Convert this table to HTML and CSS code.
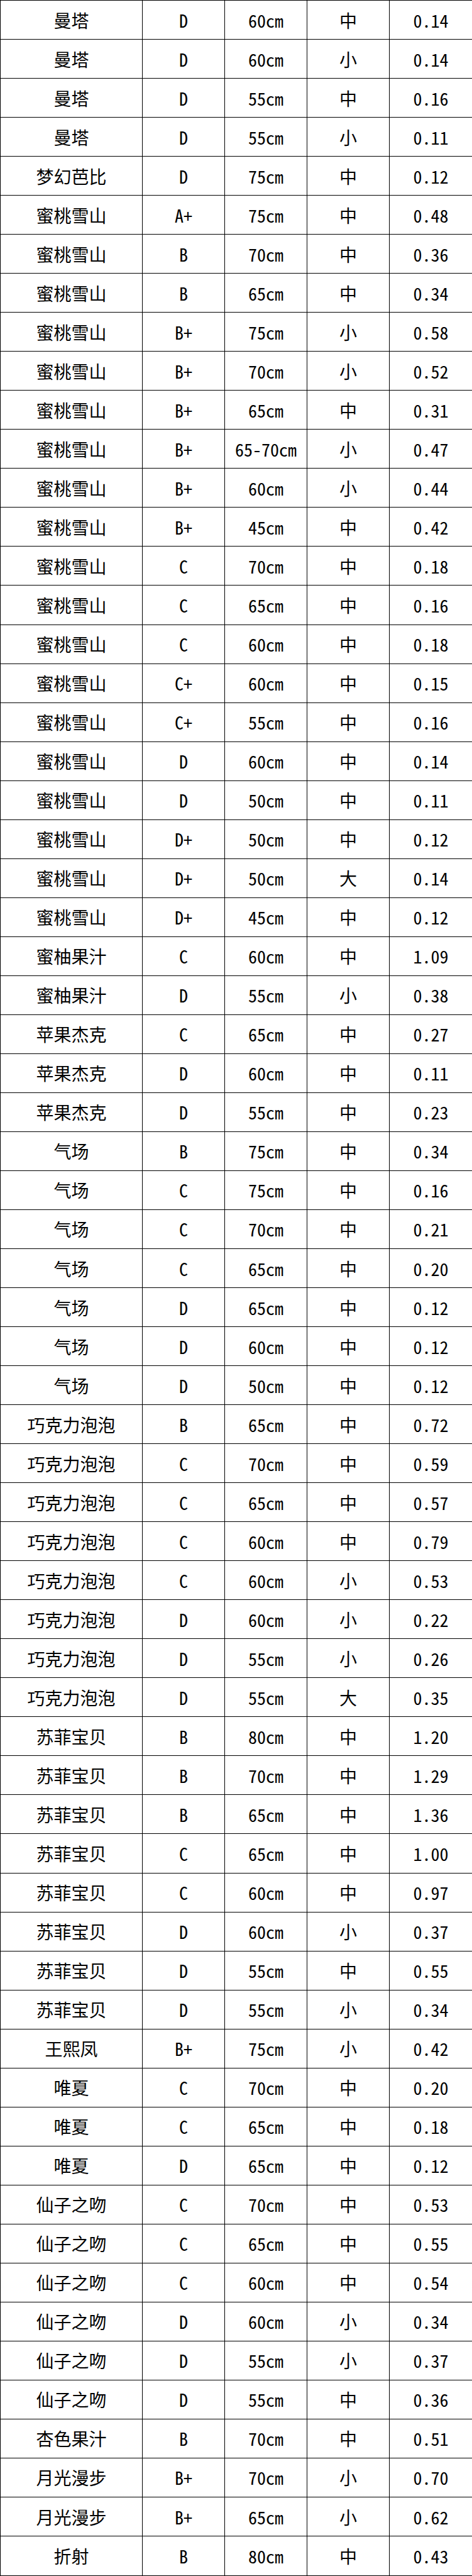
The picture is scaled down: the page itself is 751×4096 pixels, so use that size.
FILE: index.html
```html
<!DOCTYPE html>
<html lang="zh-CN">
<head>
<meta charset="utf-8">
<title>价格表</title>
<link rel="stylesheet" href="styles.css">
</head>
<body>
<table class="sheet">
<colgroup>
<col class="col-name"><col class="col-grade"><col class="col-size"><col class="col-kind"><col class="col-price">
</colgroup>
<tbody>
<tr><td>曼塔</td><td>D</td><td>60cm</td><td>中</td><td>0.14</td></tr>
<tr><td>曼塔</td><td>D</td><td>60cm</td><td>小</td><td>0.14</td></tr>
<tr><td>曼塔</td><td>D</td><td>55cm</td><td>中</td><td>0.16</td></tr>
<tr><td>曼塔</td><td>D</td><td>55cm</td><td>小</td><td>0.11</td></tr>
<tr><td>梦幻芭比</td><td>D</td><td>75cm</td><td>中</td><td>0.12</td></tr>
<tr><td>蜜桃雪山</td><td>A+</td><td>75cm</td><td>中</td><td>0.48</td></tr>
<tr><td>蜜桃雪山</td><td>B</td><td>70cm</td><td>中</td><td>0.36</td></tr>
<tr><td>蜜桃雪山</td><td>B</td><td>65cm</td><td>中</td><td>0.34</td></tr>
<tr><td>蜜桃雪山</td><td>B+</td><td>75cm</td><td>小</td><td>0.58</td></tr>
<tr><td>蜜桃雪山</td><td>B+</td><td>70cm</td><td>小</td><td>0.52</td></tr>
<tr><td>蜜桃雪山</td><td>B+</td><td>65cm</td><td>中</td><td>0.31</td></tr>
<tr><td>蜜桃雪山</td><td>B+</td><td>65-70cm</td><td>小</td><td>0.47</td></tr>
<tr><td>蜜桃雪山</td><td>B+</td><td>60cm</td><td>小</td><td>0.44</td></tr>
<tr><td>蜜桃雪山</td><td>B+</td><td>45cm</td><td>中</td><td>0.42</td></tr>
<tr><td>蜜桃雪山</td><td>C</td><td>70cm</td><td>中</td><td>0.18</td></tr>
<tr><td>蜜桃雪山</td><td>C</td><td>65cm</td><td>中</td><td>0.16</td></tr>
<tr><td>蜜桃雪山</td><td>C</td><td>60cm</td><td>中</td><td>0.18</td></tr>
<tr><td>蜜桃雪山</td><td>C+</td><td>60cm</td><td>中</td><td>0.15</td></tr>
<tr><td>蜜桃雪山</td><td>C+</td><td>55cm</td><td>中</td><td>0.16</td></tr>
<tr><td>蜜桃雪山</td><td>D</td><td>60cm</td><td>中</td><td>0.14</td></tr>
<tr><td>蜜桃雪山</td><td>D</td><td>50cm</td><td>中</td><td>0.11</td></tr>
<tr><td>蜜桃雪山</td><td>D+</td><td>50cm</td><td>中</td><td>0.12</td></tr>
<tr><td>蜜桃雪山</td><td>D+</td><td>50cm</td><td>大</td><td>0.14</td></tr>
<tr><td>蜜桃雪山</td><td>D+</td><td>45cm</td><td>中</td><td>0.12</td></tr>
<tr><td>蜜柚果汁</td><td>C</td><td>60cm</td><td>中</td><td>1.09</td></tr>
<tr><td>蜜柚果汁</td><td>D</td><td>55cm</td><td>小</td><td>0.38</td></tr>
<tr><td>苹果杰克</td><td>C</td><td>65cm</td><td>中</td><td>0.27</td></tr>
<tr><td>苹果杰克</td><td>D</td><td>60cm</td><td>中</td><td>0.11</td></tr>
<tr><td>苹果杰克</td><td>D</td><td>55cm</td><td>中</td><td>0.23</td></tr>
<tr><td>气场</td><td>B</td><td>75cm</td><td>中</td><td>0.34</td></tr>
<tr><td>气场</td><td>C</td><td>75cm</td><td>中</td><td>0.16</td></tr>
<tr><td>气场</td><td>C</td><td>70cm</td><td>中</td><td>0.21</td></tr>
<tr><td>气场</td><td>C</td><td>65cm</td><td>中</td><td>0.20</td></tr>
<tr><td>气场</td><td>D</td><td>65cm</td><td>中</td><td>0.12</td></tr>
<tr><td>气场</td><td>D</td><td>60cm</td><td>中</td><td>0.12</td></tr>
<tr><td>气场</td><td>D</td><td>50cm</td><td>中</td><td>0.12</td></tr>
<tr><td>巧克力泡泡</td><td>B</td><td>65cm</td><td>中</td><td>0.72</td></tr>
<tr><td>巧克力泡泡</td><td>C</td><td>70cm</td><td>中</td><td>0.59</td></tr>
<tr><td>巧克力泡泡</td><td>C</td><td>65cm</td><td>中</td><td>0.57</td></tr>
<tr><td>巧克力泡泡</td><td>C</td><td>60cm</td><td>中</td><td>0.79</td></tr>
<tr><td>巧克力泡泡</td><td>C</td><td>60cm</td><td>小</td><td>0.53</td></tr>
<tr><td>巧克力泡泡</td><td>D</td><td>60cm</td><td>小</td><td>0.22</td></tr>
<tr><td>巧克力泡泡</td><td>D</td><td>55cm</td><td>小</td><td>0.26</td></tr>
<tr><td>巧克力泡泡</td><td>D</td><td>55cm</td><td>大</td><td>0.35</td></tr>
<tr><td>苏菲宝贝</td><td>B</td><td>80cm</td><td>中</td><td>1.20</td></tr>
<tr><td>苏菲宝贝</td><td>B</td><td>70cm</td><td>中</td><td>1.29</td></tr>
<tr><td>苏菲宝贝</td><td>B</td><td>65cm</td><td>中</td><td>1.36</td></tr>
<tr><td>苏菲宝贝</td><td>C</td><td>65cm</td><td>中</td><td>1.00</td></tr>
<tr><td>苏菲宝贝</td><td>C</td><td>60cm</td><td>中</td><td>0.97</td></tr>
<tr><td>苏菲宝贝</td><td>D</td><td>60cm</td><td>小</td><td>0.37</td></tr>
<tr><td>苏菲宝贝</td><td>D</td><td>55cm</td><td>中</td><td>0.55</td></tr>
<tr><td>苏菲宝贝</td><td>D</td><td>55cm</td><td>小</td><td>0.34</td></tr>
<tr><td>王熙凤</td><td>B+</td><td>75cm</td><td>小</td><td>0.42</td></tr>
<tr><td>唯夏</td><td>C</td><td>70cm</td><td>中</td><td>0.20</td></tr>
<tr><td>唯夏</td><td>C</td><td>65cm</td><td>中</td><td>0.18</td></tr>
<tr><td>唯夏</td><td>D</td><td>65cm</td><td>中</td><td>0.12</td></tr>
<tr><td>仙子之吻</td><td>C</td><td>70cm</td><td>中</td><td>0.53</td></tr>
<tr><td>仙子之吻</td><td>C</td><td>65cm</td><td>中</td><td>0.55</td></tr>
<tr><td>仙子之吻</td><td>C</td><td>60cm</td><td>中</td><td>0.54</td></tr>
<tr><td>仙子之吻</td><td>D</td><td>60cm</td><td>小</td><td>0.34</td></tr>
<tr><td>仙子之吻</td><td>D</td><td>55cm</td><td>小</td><td>0.37</td></tr>
<tr><td>仙子之吻</td><td>D</td><td>55cm</td><td>中</td><td>0.36</td></tr>
<tr><td>杏色果汁</td><td>B</td><td>70cm</td><td>中</td><td>0.51</td></tr>
<tr><td>月光漫步</td><td>B+</td><td>70cm</td><td>小</td><td>0.70</td></tr>
<tr><td>月光漫步</td><td>B+</td><td>65cm</td><td>小</td><td>0.62</td></tr>
<tr><td>折射</td><td>B</td><td>80cm</td><td>中</td><td>0.43</td></tr>
</tbody>
</table>
</body>
</html>
```
FILE: styles.css
```css
html, body {
  margin: 0;
  padding: 0;
  background: #ffffff;
}

.sheet {
  width: 751px;
  height: 4096px;
  border-collapse: collapse;
  table-layout: fixed;
  font-family: "Noto Sans Mono CJK SC", "Noto Sans CJK SC", sans-serif;
  font-feature-settings: "hwid" 1;
  font-size: 28px;
  color: #000000;
}

.col-name { width: 226px; }
.col-grade { width: 131px; }
.col-size { width: 131px; }
.col-kind { width: 131px; }
.col-price { width: 132px; }

.sheet td {
  border: 1px solid #000000;
  padding: 0;
  text-align: center;
  vertical-align: middle;
  white-space: nowrap;
  line-height: 1;
}
```
